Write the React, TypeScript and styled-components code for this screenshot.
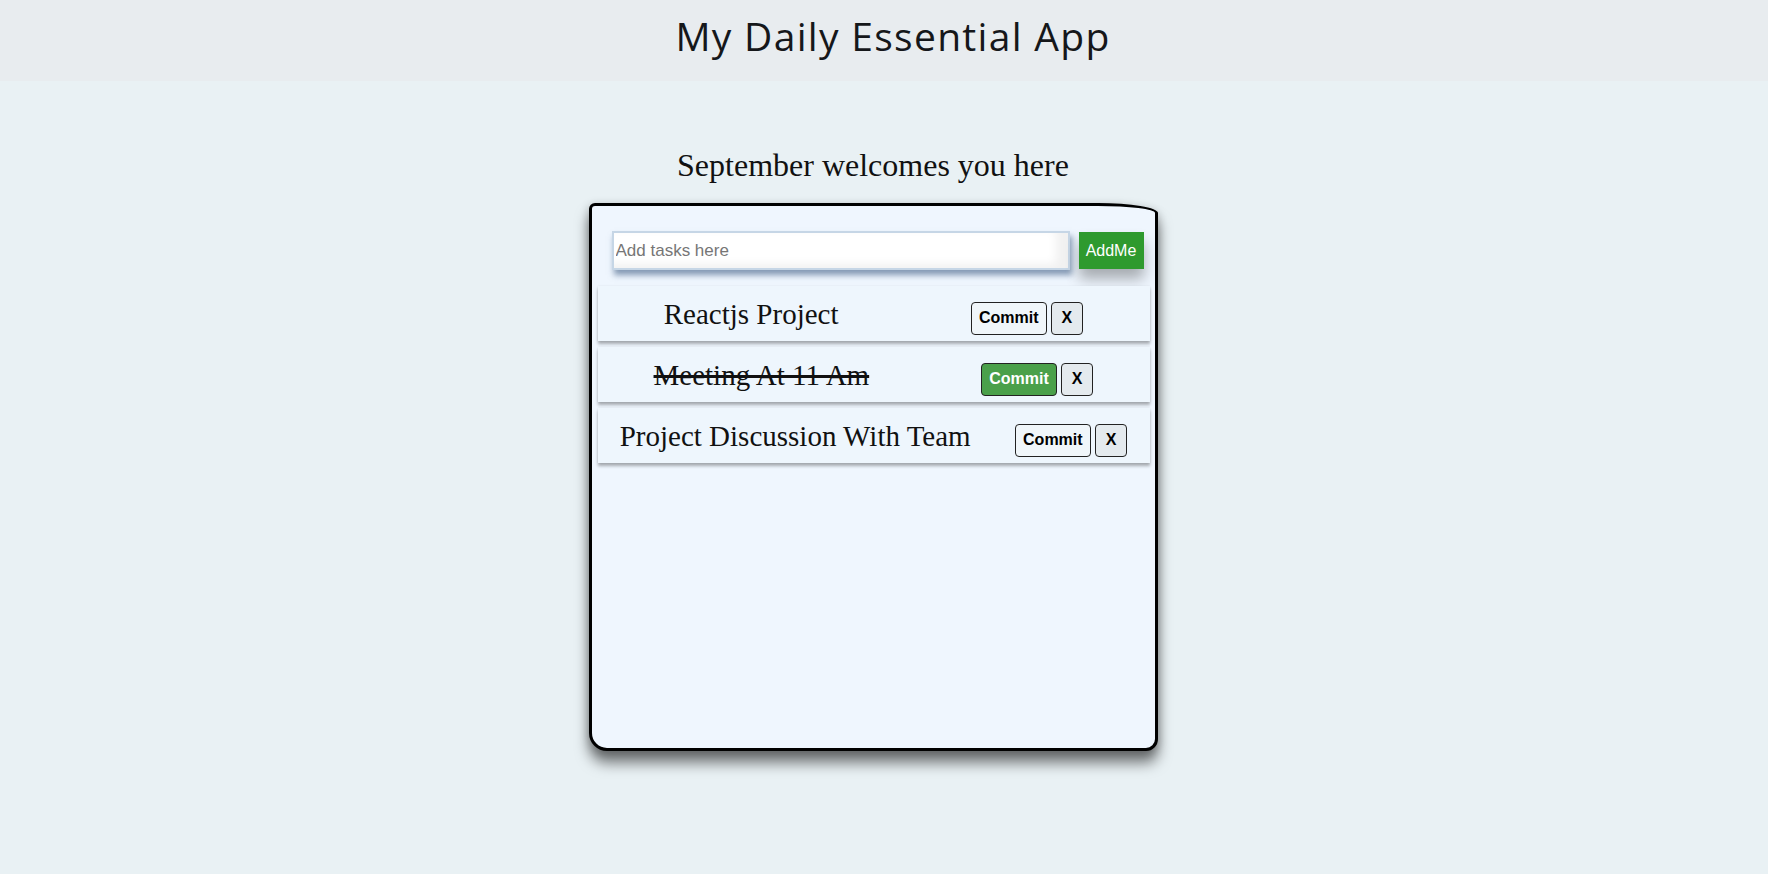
import React from "react";
import styled, { createGlobalStyle } from "styled-components";

const GlobalStyle = createGlobalStyle`
  html, body {
    margin: 0;
    padding: 0;
    background: #e9f1f4;
    font-family: "Liberation Sans", Arial, sans-serif;
  }
  * { box-sizing: border-box; }
`;

const Header = styled.header`
  height: 81px;
  background: #e8ecef;
  display: flex;
  align-items: center;
  justify-content: center;
  padding: 0 0 10px 18px;
`;

const Title = styled.h1`
  margin: 0;
  font-family: "Open Sans", "Noto Sans", sans-serif;
  font-weight: 400;
  font-size: 39px;
  letter-spacing: 1.3px;
  color: #15171a;
  line-height: 1;
`;

const Main = styled.main`
  display: flex;
  flex-direction: column;
  align-items: center;
  padding: 66px 22px 60px 0;
`;

const Greeting = styled.h2`
  margin: 0 0 20px;
  font-family: "Liberation Serif", "Times New Roman", serif;
  font-weight: 400;
  font-size: 32px;
  line-height: 36px;
  color: #111;
`;

const Card = styled.section`
  width: 569px;
  height: 548px;
  background: #eff6fe;
  border: 3px solid #000;
  border-radius: 6px 60px 12px 18px / 6px 10px 12px 18px;
  box-shadow: 0 12px 14px rgba(0, 0, 0, 0.5), 0 2px 10px rgba(0, 0, 0, 0.22);
  padding: 25px 5px 0 6px;
  display: flex;
  flex-direction: column;
`;

const Form = styled.form`
  display: flex;
  align-items: center;
  gap: 9px;
  padding: 0 6px 0 14px;
  margin-bottom: 16px;
`;

const TaskInput = styled.input`
  width: 458px;
  height: 39px;
  border: 2px solid #c6d6e6;
  background: #fff;
  padding: 0 2px;
  font-family: "Liberation Sans", Arial, sans-serif;
  font-size: 17px;
  color: #222;
  outline: none;
  box-shadow: 2px 5px 6px rgba(60, 90, 130, 0.6),
    inset -12px -4px 10px rgba(0, 0, 0, 0.06);
  &::placeholder {
    color: #767676;
  }
`;

const AddButton = styled.button`
  width: 65px;
  height: 37px;
  border: none;
  background: #2e9a2e;
  color: #fff;
  font-family: "Liberation Sans", Arial, sans-serif;
  font-size: 16px;
  padding: 0;
  box-shadow: 0 10px 14px rgba(0, 0, 0, 0.3);
  cursor: pointer;
`;

const List = styled.ul`
  list-style: none;
  margin: 0;
  padding: 0;
  display: flex;
  flex-direction: column;
  gap: 6px;
`;

const Row = styled.li`
  height: 55px;
  background: #eef6fd;
  box-shadow: 0 3px 3px rgba(0, 0, 0, 0.3), 0 0 2px rgba(0, 0, 0, 0.08);
  display: flex;
  align-items: center;
  justify-content: space-around;
`;

const TaskText = styled.span<{ $done?: boolean }>`
  font-family: "Liberation Serif", "Times New Roman", serif;
  font-size: 29px;
  line-height: 33px;
  margin-top: 2px;
  color: #111;
  text-decoration: ${(p) => (p.$done ? "line-through" : "none")};
  text-decoration-thickness: 3px;
`;

const Actions = styled.div`
  display: flex;
  gap: 4px;
  margin-top: 9px;
`;

const CommitButton = styled.button<{ $active?: boolean }>`
  height: 33px;
  padding: 0 7px;
  border: 1px solid #222;
  border-radius: 4px;
  background: ${(p) => (p.$active ? "#4aa04a" : "#f0f6fa")};
  color: ${(p) => (p.$active ? "#fff" : "#000")};
  font-family: "Liberation Sans", Arial, sans-serif;
  font-weight: 700;
  font-size: 16px;
  cursor: pointer;
`;

const DeleteButton = styled.button`
  height: 33px;
  padding: 0 10px;
  border: 1px solid #222;
  border-radius: 4px;
  background: #e4eaee;
  color: #000;
  font-family: "Liberation Sans", Arial, sans-serif;
  font-weight: 700;
  font-size: 16px;
  cursor: pointer;
`;

const tasks = [
  { text: "Reactjs Project", done: false },
  { text: "Meeting At 11 Am", done: true },
  { text: "Project Discussion With Team", done: false },
];

export default function App() {
  return (
    <>
      <GlobalStyle />
      <Header>
        <Title>My Daily Essential App</Title>
      </Header>
      <Main>
        <Greeting>September welcomes you here</Greeting>
        <Card>
          <Form onSubmit={(e) => e.preventDefault()}>
            <TaskInput placeholder="Add tasks here" />
            <AddButton type="submit">AddMe</AddButton>
          </Form>
          <List>
            {tasks.map((t) => (
              <Row key={t.text}>
                <TaskText $done={t.done}>{t.text}</TaskText>
                <Actions>
                  <CommitButton type="button" $active={t.done}>
                    Commit
                  </CommitButton>
                  <DeleteButton type="button">X</DeleteButton>
                </Actions>
              </Row>
            ))}
          </List>
        </Card>
      </Main>
    </>
  );
}
